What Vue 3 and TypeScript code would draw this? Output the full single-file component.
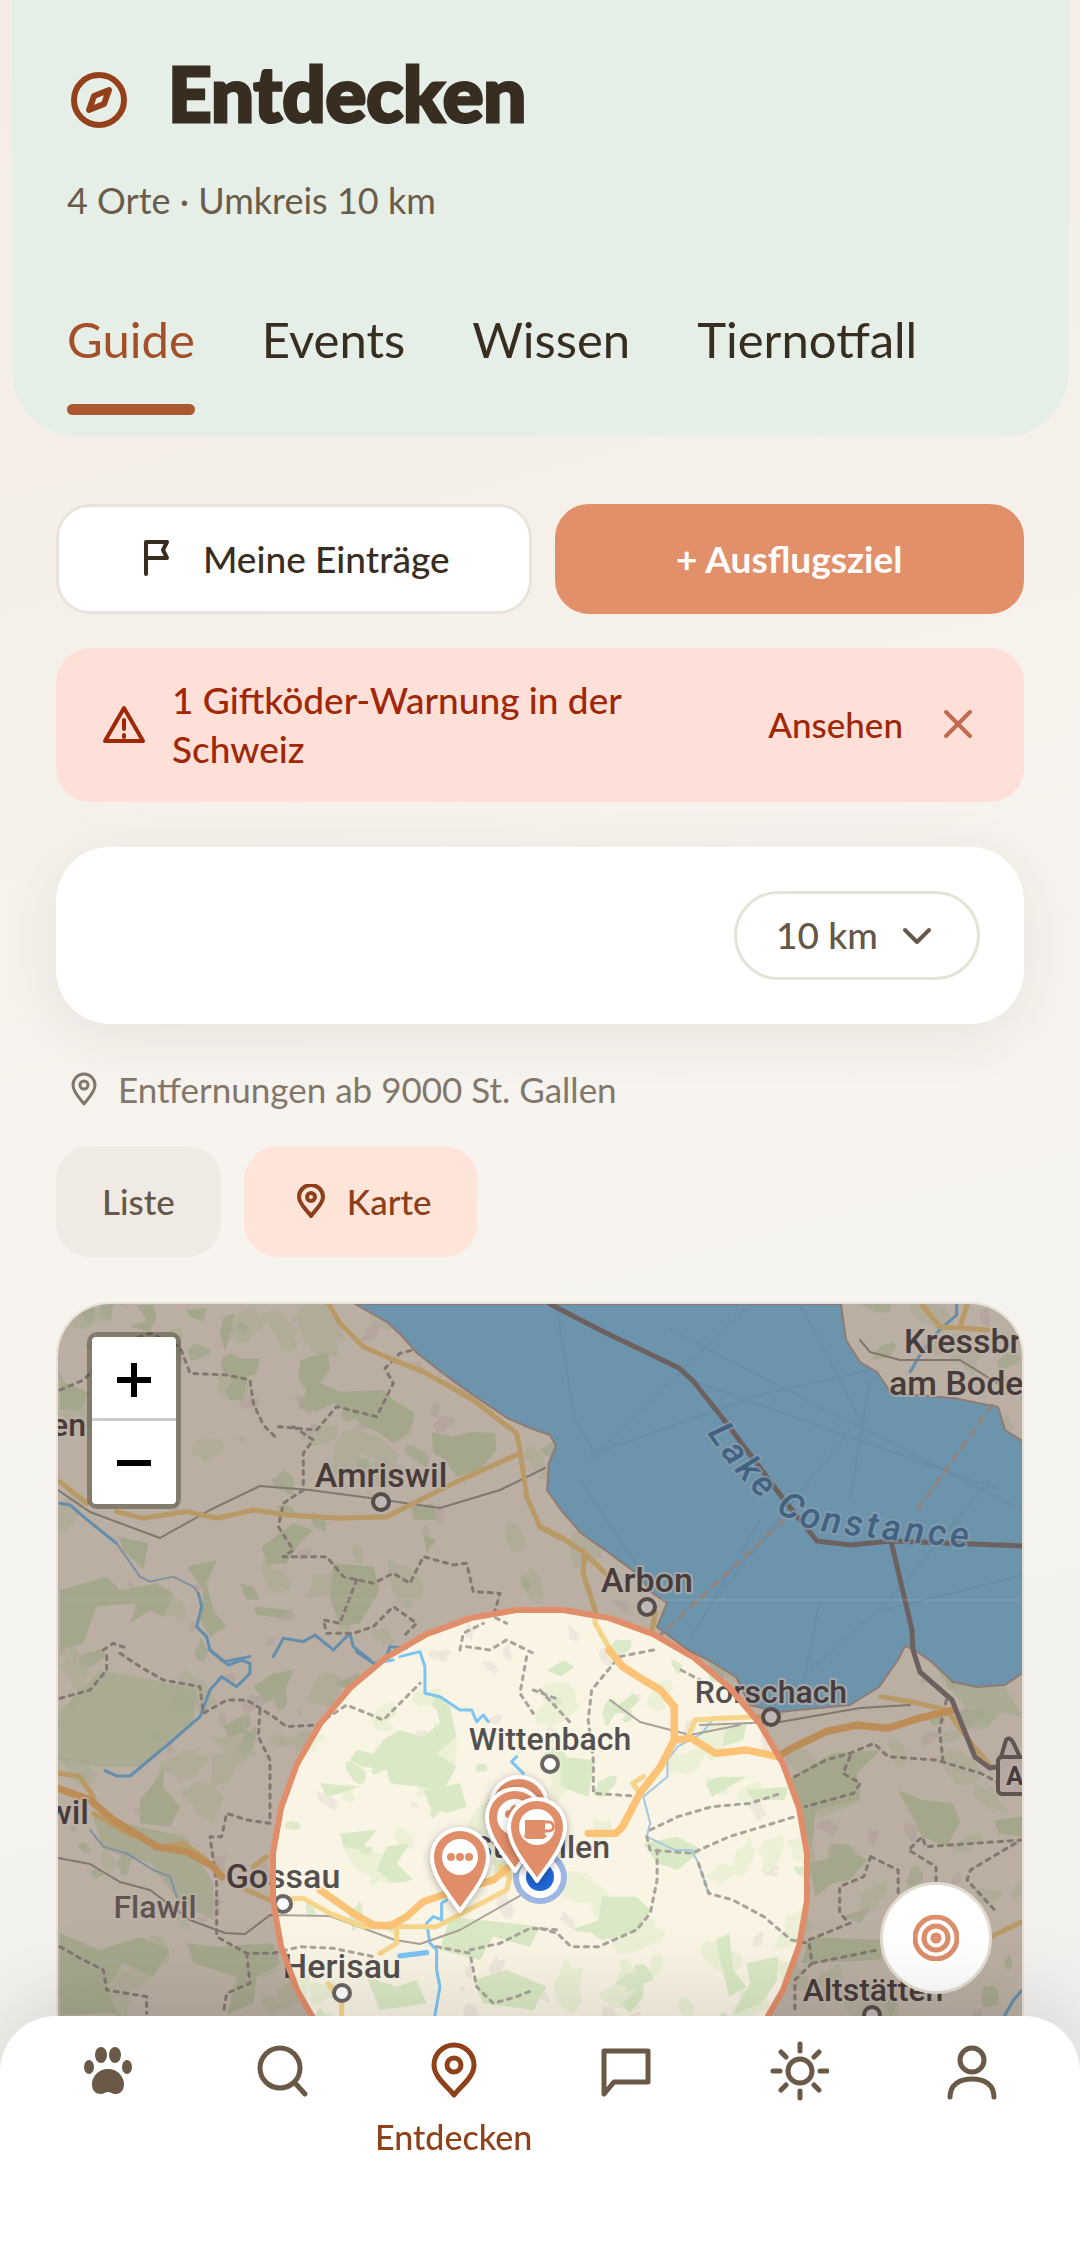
<script setup lang="ts">
import { ref } from 'vue'

interface Point {
  x: number
  y: number
}

interface Place {
  name: string
  x: number
  y: number
  anchor?: 'start' | 'middle' | 'end'
  dot?: Point
  tone?: 'minor' | 'small'
}

const tabs = ['Guide', 'Events', 'Wissen', 'Tiernotfall']
const activeTab = ref('Guide')
const view = ref<'list' | 'map'>('map')
const radius = ref('10')
const radii = ['5', '10', '25', '50']

const navItems = [
  { id: 'pets', label: 'Tiere' },
  { id: 'search', label: 'Suche' },
  { id: 'discover', label: 'Entdecken' },
  { id: 'chat', label: 'Nachrichten' },
  { id: 'care', label: 'Alltag' },
  { id: 'profile', label: 'Profil' },
]
const activeNav = ref('discover')

const places: Place[] = [
  { name: 'en', x: 86, y: 1436, anchor: 'end', tone: 'small' },
  { name: 'Amriswil', x: 381, y: 1487, dot: { x: 381, y: 1502 } },
  { name: 'Kressbr', x: 904, y: 1353, anchor: 'start' },
  { name: 'am Bode', x: 889, y: 1395, anchor: 'start' },
  { name: 'Arbon', x: 647, y: 1592, dot: { x: 647, y: 1607 } },
  { name: 'Rorschach', x: 771, y: 1703, dot: { x: 771, y: 1717 }, tone: 'small' },
  { name: 'Wittenbach', x: 550, y: 1750, dot: { x: 550, y: 1764 }, tone: 'small' },
  { name: 'St. Gallen', x: 610, y: 1858, anchor: 'end', tone: 'small' },
  { name: 'wil', x: 89, y: 1824, anchor: 'end' },
  { name: 'Gossau', x: 283, y: 1888, dot: { x: 283, y: 1904 } },
  { name: 'Flawil', x: 155, y: 1918, tone: 'minor' },
  { name: 'Herisau', x: 342, y: 1978, dot: { x: 342, y: 1993 } },
  { name: 'Altstätten', x: 873, y: 2001, dot: { x: 872, y: 2015 }, tone: 'small' },
]

const center: Point = { x: 540, y: 1877 }
const searchRadius = 268

/* The search area is a polygon of 36 points around the user's position. */
const areaPoints = Array.from({ length: 36 }, (_, i) => {
  const angle = ((i * 10 + 5) * Math.PI) / 180
  const x = center.x + searchRadius * Math.cos(angle)
  const y = center.y + searchRadius * Math.sin(angle)
  return `${x.toFixed(1)} ${y.toFixed(1)}`
})
const areaPath = `M${areaPoints.join('L')}Z`
const dimPath = `M0 1200H1200V2400H0Z${areaPath}`

/* Repeatable terrain: small irregular patches of wood and settlement. */
function makeRandom(seed: number): () => number {
  let state = seed
  return () => {
    state = (state * 1664525 + 1013904223) % 4294967296
    return state / 4294967296
  }
}

function makePatches(seed: number, count: number, min: number, max: number): string {
  const random = makeRandom(seed)
  let path = ''
  for (let i = 0; i < count; i++) {
    const cx = 50 + random() * 980
    const cy = 1300 + random() * 760
    const size = min + random() * (max - min)
    const tilt = random() * 3
    const points: string[] = []
    for (let k = 0; k < 11; k++) {
      const a = (k / 11) * Math.PI * 2
      const r = size * (0.5 + random() * 0.6)
      const px = Math.cos(a) * r * 1.5
      const py = Math.sin(a) * r * 0.8
      const x = cx + px * Math.cos(tilt) - py * Math.sin(tilt)
      const y = cy + px * Math.sin(tilt) + py * Math.cos(tilt)
      points.push(`${x.toFixed(1)} ${y.toFixed(1)}`)
    }
    path += `M${points.join('L')}Z`
  }
  return path
}

const woods = makePatches(11, 90, 3, 11)
const paleWoods = makePatches(29, 150, 6, 20)
const settlements = makePatches(47, 130, 3, 11)

const pins = [
  { x: 519, y: 1859, icon: 'none' },
  { x: 515, y: 1871, icon: 'cloud' },
  { x: 460, y: 1911, icon: 'more' },
  { x: 537, y: 1881, icon: 'cup' },
]
</script>

<template>
  <div class="page">
    <header class="header">
      <div class="title-row">
        <svg class="title-icon" viewBox="0 0 56 56" aria-hidden="true">
          <circle cx="28" cy="28" r="25" />
          <path d="M38 18 33 32 18 38 23 24Z" />
        </svg>
        <h1>Entdecken</h1>
      </div>
      <p class="subtitle">4 Orte · Umkreis 10 km</p>
      <nav class="tabs" aria-label="Bereiche">
        <button
          v-for="tab in tabs"
          :key="tab"
          type="button"
          class="tab"
          :class="{ active: tab === activeTab }"
          @click="activeTab = tab"
        >
          {{ tab }}
        </button>
      </nav>
    </header>

    <main class="content">
      <div class="actions">
        <button type="button" class="action outline">
          <svg class="flag" viewBox="0 0 26 36" aria-hidden="true">
            <path d="M2 34V2H23L19 10 23 18H2" />
          </svg>
          <span>Meine Einträge</span>
        </button>
        <button type="button" class="action filled">+ Ausflugsziel</button>
      </div>

      <section class="alert" role="alert">
        <svg class="alert-icon" viewBox="0 0 44 40" aria-hidden="true">
          <path d="M22 4 41 37H3Z" />
          <path d="M22 16V25M22 31V33" />
        </svg>
        <p>1 Giftköder-Warnung in der Schweiz</p>
        <a href="#warnungen">Ansehen</a>
        <button type="button" class="close" aria-label="Schliessen">
          <svg viewBox="0 0 30 30" aria-hidden="true"><path d="M3 3 27 27M27 3 3 27" /></svg>
        </button>
      </section>

      <section class="search-card">
        <div class="radius">
          <select v-model="radius" aria-label="Umkreis">
            <option v-for="km in radii" :key="km" :value="km">{{ km }} km</option>
          </select>
          <svg viewBox="0 0 30 18" aria-hidden="true"><path d="M3 3 15 15 27 3" /></svg>
        </div>
      </section>

      <p class="origin">
        <svg viewBox="0 0 28 34" aria-hidden="true">
          <path d="M14 32C9 25 3 20 3 13A11 11 0 0 1 25 13C25 20 19 25 14 32Z" />
          <circle cx="14" cy="13" r="4" />
        </svg>
        Entfernungen ab 9000 St. Gallen
      </p>

      <div class="views">
        <button type="button" class="chip" :class="{ active: view === 'list' }" @click="view = 'list'">
          Liste
        </button>
        <button type="button" class="chip" :class="{ active: view === 'map' }" @click="view = 'map'">
          <svg viewBox="-7 0 42 34" aria-hidden="true">
            <path d="M14 32C9 25 2 20 2 13A12 12 0 0 1 26 13C26 20 19 25 14 32Z" />
            <circle cx="14" cy="13" r="4" />
          </svg>
          Karte
        </button>
      </div>

      <section class="map" aria-label="Karte">
        <svg class="map-canvas" viewBox="58 1304 964 964" preserveAspectRatio="xMidYMin slice">
          <rect x="0" y="1200" width="1200" height="1100" fill="#f9f4e4" />
          <path :d="settlements" fill="#f0e7dc" />
          <path :d="paleWoods" class="patch" fill="#ebf0d6" stroke="#ebf0d6" />
          <path :d="woods" class="patch" fill="#dceaca" stroke="#dceaca" />

          <!-- Large woods, north-west -->
          <g transform="translate(40 1290) scale(.3333)" fill="#dae9c5">
            <path d="M290 45H340L350 80 330 125 270 110 320 90Z" />
            <path d="M440 60 500 55 490 95 450 80ZM550 80 585 70 570 140 555 185 540 130Z" />
            <path d="M545 205 570 190 600 205 660 205 650 250 620 260 610 330 570 330 555 300 580 270 545 240Z" />
            <path d="M780 210 865 185 870 240 840 280 900 305 1030 300 1060 330 1125 370 1110 430 1060 460 1010 425 960 400 930 370 880 340 830 365 775 355 800 300 775 270Z" />
            <path d="M1175 425 1240 440 1300 425 1365 430 1370 480 1320 540 1250 560 1215 510 1180 490Z" />
            <path d="M60 270 150 310 120 360 60 360ZM1150 735 1190 750 1160 790ZM1115 650 1180 640 1190 690 1120 690Z" />
            <path d="M665 770 760 700 820 720 780 760 740 820 680 825ZM235 740 325 760 310 840 250 780Z" />
            <path d="M880 820 1000 830 1020 900 960 1000 900 1010 870 920ZM440 830 530 810 500 880 520 960 560 1010 510 1040 480 990 490 900Z" />
            <path d="M60 900 200 860 240 900 350 880 400 910 370 980 330 960 270 1000 290 940 170 950 130 1060 60 1080ZM600 880 640 890 660 930 620 930ZM640 950 750 960 730 985 650 975Z" />
          </g>

          <!-- Large woods, south-west -->
          <g transform="translate(40 1650) scale(.3333)" fill="#dae9c5">
            <path d="M55 190 180 60 340 90 470 120 460 220 300 350 180 350 55 330Z" opacity=".75" />
            <path d="M550 230 600 200 610 250 570 260ZM640 110 700 70 760 60 740 110 680 160ZM300 450 340 400 370 350 370 410 420 470 390 530 300 520Z" />
            <path d="M160 500 440 560 520 700 520 810 420 760 330 640 190 600Z" opacity=".8" />
            <path d="M60 850 180 900 300 860 390 900 340 980 250 940 200 1010 230 1090 60 1095ZM440 880 530 890 700 880 720 940 650 980 640 1060 560 1095 590 980 460 940Z" />
            <path d="M880 100 960 70 940 120ZM1180 130 1230 170 1250 260 1190 310 1250 350 1210 420 1050 400 1040 360 970 350 930 330 950 300 1000 310 1030 270 1080 240 1150 260 1200 220Z" />
            <path d="M840 400 960 410 900 430 860 440ZM1150 420 1260 400 1280 470 1220 490 1170 470ZM900 550 1010 540 960 600 910 590ZM1040 590 1110 580 1070 640 1120 690 1060 700 1010 660Z" />
            <path d="M1230 800 1500 830 1470 890 1360 860 1320 930 1200 900ZM980 980 1070 1010 1130 990 1160 1060 1020 1080ZM1300 990 1400 960 1520 1010 1480 1080 1330 1060Z" />
          </g>

          <!-- Large woods, south-east -->
          <g transform="translate(540 1650) scale(.3444 .3333)" fill="#dae9c5">
            <path d="M20 60 70 30 100 50 60 80ZM200 190 270 130 290 150 250 190ZM60 320 160 330 140 440 60 410Z" />
            <path d="M540 230 600 220 590 270 530 290ZM480 400 520 380 600 380 500 440ZM600 420 720 410 710 450 620 450Z" />
            <path d="M300 580 400 560 470 600 400 660 340 640ZM180 740 280 740 320 780 290 840 180 870 150 850 90 840 170 810Z" />
            <path d="M510 870 550 850 560 960 600 1010 550 1040 530 960ZM240 1060 300 1000 300 1040 260 1090ZM600 940 690 920 690 990 640 1060 560 1095 610 1000Z" />
            <path d="M730 380 850 310 990 300 920 370 930 450 800 480 790 600 760 520ZM1040 420 1110 450 1200 460 1220 520 1180 590 1110 560 1080 500ZM1320 510 1400 500 1400 560 1330 550Z" />
            <path d="M780 640 860 620 880 590 950 630 900 690 850 700 800 740ZM780 860 990 870 990 930 760 940ZM880 800 960 770 930 820Z" />
            <path d="M1110 0 1210 100 1350 110 1400 200 1340 190 1290 230 1200 130Z" opacity=".7" />
          </g>

          <!-- Lake -->
          <path
            class="lake"
            d="M355 1304 387 1322 400 1334 417 1353 440 1371 470 1393 507 1418 530 1428 550 1435 556 1446 549 1463 547 1490 561 1510 581 1533 609 1553 636 1573 651 1592 667 1603 657 1627 688 1650 712 1662 736 1677 750 1705 778 1712 850 1705 879 1687 898 1660 905 1646 915 1650 933 1663 953 1682 977 1687 1005 1685 1024 1672V1442L1005 1430 998 1407 953 1398 891 1393 877 1372 860 1362 846 1340 841 1304Z"
          />
          <path
            class="ferry"
            d="M556 1304 575 1420 600 1460M750 1304 590 1460M800 1304 860 1420M670 1330 1022 1510M590 1455 760 1395 870 1370M715 1600 850 1430M690 1380 1000 1490M870 1380 850 1500M820 1600 800 1700M885 1610 1024 1575M990 1480 890 1600 810 1670M580 1480 640 1570M760 1520 690 1640"
          />
          <path class="ferry warm" d="M992 1405 914 1515M784 1520 720 1580 655 1640" />

          <!-- Rivers -->
          <g transform="translate(40 1290) scale(.3333)" class="river">
            <path d="M60 640 90 645 130 680 230 760" />
            <path class="thin" d="M230 760 300 860 330 875 400 860 460 890 475 910" />
            <path d="M475 910 485 950 470 1010 500 1040 510 1080 550 1115 630 1100M700 1100 730 1045 790 1055 825 1035 880 1080 930 1030 940 1070 990 1110M1040 1100 1050 1070 1100 1075" />
          </g>
          <g transform="translate(40 1650) scale(.3333)" class="river">
            <path d="M510 0 565 45 605 30 630 40 630 70 590 110 545 80 510 120 480 200 400 270 310 345 270 378 230 378 195 362" />
            <path d="M950 5 1000 40 1060 30M1080 20 1140 5 1155 50 1155 130 1200 140 1260 180 1295 180 1310 215 1330 195 1345 215M1430 320 1415 335 1450 370M1220 750 1205 760 1205 810 1180 800 1160 820 1170 880 1190 900 1190 960 1200 1010 1185 1095" />
            <path class="thin" d="M150 540 190 590 260 610 340 660 390 680 410 740" />
            <path d="M1080 918 1160 908" stroke-width="16" />
          </g>
          <g transform="translate(540 1290) scale(.3444 .3333)" class="river">
            <path d="M1210 45V75L1160 120 1100 200 1075 245" />
          </g>
          <g transform="translate(540 1650) scale(.3444 .3333)" class="river">
            <path d="M1400 1020 1375 1050 1350 1095" />
            <path class="thin" d="M500 210 470 250 400 290 370 330 370 380 300 440 320 520 310 560 390 600 440 600 460 640 490 730" />
          </g>

          <!-- District borders -->
          <g transform="translate(40 1290) scale(.3333)" class="border">
            <path d="M60 300 130 270 240 160 330 130 420 170 450 250 560 255 630 270 640 340 670 405 715 450M715 410 830 420 890 350 1010 380 1060 280 1035 235 1080 190 1120 180" />
            <path d="M760 410 820 450 790 490 790 600 730 640 715 710 760 780 730 800 860 800 910 860 1000 880 1060 850 1110 880 1150 800 1240 825 1280 820 1300 905 1380 910 1360 980 1400 1000M950 870 900 1000 850 990 860 1030 940 1030 1000 1010 1060 950 1130 1000 1090 1040M1260 1080 1270 1030 1330 1000M1280 1070 1350 1080 1400 1050 1480 1090" />
            <path d="M190 1080 220 1060 260 1075" />
          </g>
          <g transform="translate(40 1650) scale(.3333)" class="border">
            <path d="M60 145 150 120 200 60 200 10M240 10 300 50 370 90 480 110 490 190 560 150 620 150 700 200 740 230 830 225 920 165 1030 210 1140 100M660 180 655 260 690 330 690 520 620 510 560 490 545 560 510 560 530 700 530 860 620 910 700 910 780 890 880 895 1000 920M620 910 630 1000 560 1030 550 1090" />
            <path d="M60 890 130 930 190 960 200 1020 320 1040 320 1090M1460 20 1440 130 1480 190M1480 120 1560 150M1190 890 1290 910 1310 1010 1360 1060 1430 1040 1480 1020M1290 900 1380 880 1470 835 1560 840" />
          </g>
          <g transform="translate(540 1650) scale(.3444 .3333)" class="border">
            <path d="M330 0 230 20 150 120 140 210 155 330 155 430 300 440M0 120 90 220M410 60 500 110M320 540 400 500 500 470 610 460 700 430M310 560 320 600 440 610 550 560 740 500M340 600 340 690 320 790 280 840 170 890 90 890 50 850 0 835M460 640 490 730 560 750 650 800 730 870 780 880" />
            <path d="M740 380 830 330 900 310 970 280 1010 320 1150 330 1280 370 1390 430M900 320 880 370 930 400 910 430 770 470M1180 150 1160 240 1170 330M1380 580 1250 660 1240 690 1320 780M1400 570 1120 590 1110 560 1070 600 1150 650 1150 700M960 620 1040 660 1040 740M960 620 940 680 870 710 870 790 900 820 780 870 790 940 980 900M790 940 740 990 740 1090" />
          </g>

          <!-- Railways -->
          <g class="rail">
            <path d="M58 1490 90 1512 160 1538 210 1510 260 1486 310 1490 370 1498 440 1508 500 1490 545 1468" />
            <path d="M58 1858 90 1864 120 1882 150 1890 190 1920 225 1933 245 1934 270 1915 330 1916 395 1940 420 1944 460 1930 530 1890" />
            <path d="M610 1700 640 1722 690 1735 740 1725M860 1340 870 1352 900 1360 960 1360 1000 1385M700 1725 780 1722 860 1708 910 1705" />
          </g>

          <!-- Roads -->
          <g transform="translate(40 1290) scale(.3333)" class="road">
            <path d="M865 40 900 100 970 170 1060 210 1150 245 1300 330 1430 430 1440 480 1460 620 1500 710 1560 745M1440 490 1240 580 1040 680 900 685 740 675 640 660 530 685 440 665 310 685 230 665M60 575 140 640" />
          </g>
          <g transform="translate(540 1290) scale(.3444 .3333)" class="road">
            <path d="M0 710 60 740 130 790 125 850 160 960 160 1000 210 1090M130 790 200 860M1110 45 1160 110 1300 120M1240 45 1220 110M335 970 325 1020" />
          </g>
          <g transform="translate(540 1650) scale(.3444 .3333)" class="road">
            <path d="M430 260 450 210 520 205 640 200M990 140 1100 160 1180 180 1260 290 1310 350M1400 815 1310 860M290 430 270 400 300 380" />
            <path class="major" d="M200 0 240 50 300 90 350 120 390 170 390 270 440 265 510 310 600 300 690 320 740 290 830 245 920 225 1010 235 1100 205 1200 180M390 270 350 350 290 430 240 530 220 550 140 550" />
          </g>
          <g transform="translate(40 1650) scale(.3333)" class="road">
            <path d="M55 370 120 380 160 440M160 490 280 560M370 590 430 580 500 630M620 720 690 750 790 745 870 790 970 830 1190 830 1400 720 1410 680 1380 650M1070 830 1070 880 1020 910M865 1000 905 1060 905 1095M640 650 680 620" />
            <path class="major" d="M55 415 150 450 220 510 350 590 440 605 520 650 545 680M840 720 940 790 1000 825 1050 828 1100 800 1150 755 1240 725 1360 690 1420 640" />
          </g>

          <!-- National borders -->
          <path class="nation" d="M550 1304 600 1330 679 1368 694 1382 728 1425 784 1500 817 1541 850 1545 891 1541 1024 1546M891 1541 912 1630 913 1650 920 1672 952 1700 975 1757 990 1768 1024 1762" />
          <path class="tile-edge" d="M58 1600H1024" />

          <!-- Labels -->
          <g class="shield">
            <path d="M1001 1757 1006 1740Q1009 1736 1013 1742L1020 1757" />
            <rect x="998" y="1757" width="50" height="37" rx="4" />
            <text x="1006" y="1785">A</text>
          </g>
          <path id="lake-label-path" d="M707 1433Q762 1516 815 1530Q870 1539 1010 1552" fill="none" />
          <text class="lake-label">
            <textPath href="#lake-label-path">Lake Constance</textPath>
          </text>
          <g v-for="place in places" :key="place.name" class="place" :class="place.tone">
            <text :x="place.x" :y="place.y" :text-anchor="place.anchor ?? 'middle'">{{ place.name }}</text>
            <circle v-if="place.dot" :cx="place.dot.x" :cy="place.dot.y" r="8" />
          </g>

          <!-- Search area -->
          <path :d="dimPath" fill="#2a100c" fill-opacity=".3" fill-rule="evenodd" />
          <path :d="areaPath" class="area" />

          <!-- Own position -->
          <circle :cx="center.x" :cy="center.y" r="27" fill="#9db7e2" />
          <circle :cx="center.x" :cy="center.y" r="21" fill="#fff" />
          <circle :cx="center.x" :cy="center.y" r="14" fill="#2168d8" />

          <g v-for="pin in pins" :key="pin.x" :transform="`translate(${pin.x} ${pin.y})`">
            <path class="pin" d="M0 0C-9-14-28-34-28-54A28 28 0 0 1 28-54C28-34 9-14 0 0Z" />
            <circle cx="0" cy="-54" r="18" fill="#fff" />
            <g v-if="pin.icon === 'more'" fill="#e08e69">
              <circle cx="-9" cy="-54" r="4" />
              <circle cx="0" cy="-54" r="4" />
              <circle cx="9" cy="-54" r="4" />
            </g>
            <g v-if="pin.icon === 'cloud'" fill="#e08e69">
              <circle cx="-6" cy="-57" r="4" />
              <circle cx="0" cy="-61" r="5" />
            </g>
            <g v-if="pin.icon === 'cup'">
              <path d="M-12-61H8V-46H10Q9-42 5-42H-9Q-13-42-13-46H-12Z" fill="#e08e69" />
              <path d="M8-59H12A4 4 0 0 1 12-50H8" fill="none" stroke="#e08e69" stroke-width="3" />
            </g>
          </g>
        </svg>

        <div class="zoom">
          <button type="button" aria-label="Vergrössern">
            <svg viewBox="0 0 34 34" aria-hidden="true"><path d="M0 17H34M17 0V34" /></svg>
          </button>
          <button type="button" aria-label="Verkleinern">
            <svg viewBox="0 0 34 34" aria-hidden="true"><path d="M0 17H34" /></svg>
          </button>
        </div>

        <button type="button" class="locate" aria-label="Auf meinen Standort zentrieren">
          <svg viewBox="0 0 46 46" aria-hidden="true">
            <circle cx="23" cy="23" r="21" />
            <circle cx="23" cy="23" r="12" />
            <circle cx="23" cy="23" r="3" />
          </svg>
        </button>
      </section>
    </main>

    <nav class="bottom-nav" aria-label="Hauptnavigation">
      <button
        v-for="item in navItems"
        :key="item.id"
        type="button"
        class="nav-item"
        :class="{ active: item.id === activeNav }"
        :aria-label="item.label"
        @click="activeNav = item.id"
      >
        <svg viewBox="0 0 60 60" aria-hidden="true">
          <g v-if="item.id === 'pets'" class="solid">
            <ellipse cx="11" cy="26" rx="5" ry="7" />
            <ellipse cx="23" cy="14" rx="6" ry="8" />
            <ellipse cx="37" cy="14" rx="6" ry="8" />
            <ellipse cx="49" cy="26" rx="5" ry="7" />
            <path d="M30 28C40 28 46 36 46 43C46 50 42 53 37 53C34 53 33 51 30 51C27 51 26 53 23 53C18 53 14 50 14 43C14 36 20 28 30 28Z" />
          </g>
          <g v-else-if="item.id === 'search'">
            <circle cx="29" cy="27" r="20" />
            <path d="M44 42 54 53" />
          </g>
          <g v-else-if="item.id === 'discover'">
            <path d="M30 54C23 45 10 36 10 24A20 20 0 0 1 50 24C50 36 37 45 30 54Z" />
            <circle cx="30" cy="24" r="7" />
          </g>
          <g v-else-if="item.id === 'chat'">
            <path d="M8 10H52V41H18L8 53Z" />
          </g>
          <g v-else-if="item.id === 'care'">
            <circle cx="31" cy="30" r="12" />
            <path d="M31 3V10M31 50V57M4 30H11M51 30H58M12 11 17 16M45 44 50 49M12 49 17 44M45 16 50 11" />
          </g>
          <g v-else>
            <circle cx="30" cy="19" r="12" />
            <path d="M8 56C8 44 17 38 30 38C43 38 52 44 52 56" />
          </g>
        </svg>
        <span v-if="item.id === activeNav">{{ item.label }}</span>
      </button>
    </nav>
  </div>
</template>

<style>
body {
  margin: 0;
}
</style>

<style scoped>
.page {
  display: flex;
  flex-direction: column;
  min-height: 100vh;
  box-sizing: border-box;
  font-family: Lato, 'Open Sans', sans-serif;
  color: #382d21;
  background: linear-gradient(165deg, #f6ece7 0%, #f5f0ea 28%, #f7f4ef 50%, #f3f2ef 75%, #f1f0ee 100%);
}

button,
select {
  font-family: inherit;
  margin: 0;
  cursor: pointer;
}

p,
h1 {
  margin: 0;
}

svg {
  display: block;
  flex: none;
  fill: none;
  stroke: currentColor;
  stroke-linecap: round;
  stroke-linejoin: round;
}

/* Header */
.header {
  margin: 0 11px 0 12px;
  padding: 64px 55px 22px;
  background: #e5efe8;
  border-radius: 0 0 66px 66px;
}

.title-row {
  display: flex;
  gap: 41px;
  height: 72px;
}

.title-icon {
  width: 56px;
  height: 56px;
  margin: 8px 0 0 4px;
  align-self: flex-start;
  color: #94401a;
  stroke-width: 6;
}

h1 {
  font-size: 76px;
  line-height: 58px;
  font-weight: 900;
  -webkit-text-stroke: 3px currentColor;
}

.subtitle {
  margin-top: 42px;
  font-size: 36px;
  line-height: 44px;
  color: #6a5c49;
}

.tabs {
  display: flex;
  gap: 67px;
  margin-top: 89px;
}

.tab {
  padding: 0 0 37px;
  border: 0;
  border-bottom: 11px solid transparent;
  background: none;
  font-size: 49px;
  line-height: 56px;
  color: #382d21;
}

.tab.active {
  position: relative;
  color: #a34f28;
}

.tab.active::after {
  content: '';
  position: absolute;
  left: 0;
  right: 0;
  bottom: -11px;
  height: 11px;
  border-radius: 6px;
  background: #ab572f;
}

/* Content */
.content {
  display: flex;
  flex-direction: column;
  flex: 1;
  padding: 67px 56px 0;
}

.actions {
  display: flex;
  gap: 23px;
}

.action {
  display: flex;
  flex: 1 1 0;
  align-items: center;
  justify-content: center;
  gap: 33px;
  box-sizing: border-box;
  height: 110px;
  padding: 0 0 2px;
  border: 3px solid;
  border-radius: 34px;
  font-size: 37px;
  font-weight: 500;
}

.action.outline {
  padding-left: 6px;
  border-color: #e9e3da;
  background: #fff;
  color: #382d21;
}

.action.filled {
  border-color: #e1906a;
  background: #e1906a;
  color: #fff;
  font-weight: 700;
}

.flag {
  width: 26px;
  height: 36px;
  stroke-width: 4;
}

.alert {
  display: flex;
  align-items: center;
  box-sizing: border-box;
  margin-top: 34px;
  padding: 27px 51px 29px 46px;
  border-radius: 34px;
  background: #fee0d9;
  color: #9f2704;
}

.alert-icon {
  width: 44px;
  height: 40px;
  stroke-width: 4;
}

.alert p {
  flex: 1;
  margin: 0 96px 0 26px;
  font-size: 37px;
  line-height: 49px;
  font-weight: 500;
}

.alert a {
  color: inherit;
  font-size: 35px;
  font-weight: 500;
  text-decoration: none;
}

.close {
  margin-left: 40px;
  padding: 0;
  border: 0;
  background: none;
  color: #bf6a52;
}

.close svg {
  width: 30px;
  height: 30px;
  stroke-width: 4;
}

.search-card {
  display: flex;
  justify-content: flex-end;
  margin-top: 45px;
  padding: 44px;
  border-radius: 54px;
  background: #fff;
  box-shadow: 0 12px 60px rgba(50, 45, 40, .08);
}

.radius {
  position: relative;
}

.radius select {
  appearance: none;
  box-sizing: border-box;
  width: 246px;
  height: 89px;
  padding: 0 40px 2px 39px;
  border: 3px solid #e5e2d8;
  border-radius: 45px;
  background: #fff;
  color: #65574a;
  font-size: 37px;
  font-weight: 500;
}

.radius svg {
  position: absolute;
  right: 48px;
  top: 36px;
  width: 30px;
  height: 18px;
  color: #65574a;
  stroke-width: 4;
  pointer-events: none;
}

.origin {
  display: flex;
  align-items: center;
  gap: 20px;
  margin: 45px 0 0 14px;
  font-size: 35px;
  line-height: 40px;
  color: #82776a;
}

.origin svg {
  width: 28px;
  height: 34px;
  stroke-width: 3;
}

.views {
  display: flex;
  gap: 23px;
  margin-top: 37px;
}

.chip {
  display: flex;
  align-items: center;
  gap: 15px;
  height: 111px;
  padding: 0 46px 2px;
  border: 0;
  border-radius: 34px;
  background: #efeae4;
  color: #65574a;
  font-size: 35px;
  font-weight: 500;
}

.chip svg {
  width: 42px;
  height: 34px;
  stroke-width: 4;
}

.chip.active {
  background: #ffe4d9;
  color: #8b3f1a;
}

/* Map */
.map {
  position: relative;
  flex: 1;
  min-height: 700px;
  margin-top: 45px;
  border: 2px solid #e8e1d8;
  border-radius: 54px 54px 0 0;
  overflow: hidden;
}

.map-canvas {
  position: absolute;
  inset: 0;
  width: 100%;
  height: 100%;
  stroke: none;
}

.patch {
  stroke-width: 3;
}

.lake {
  fill: #89cdf3;
  stroke: #b9a99f;
  stroke-width: 2;
}

.ferry {
  stroke: #7fbbe2;
  stroke-opacity: .5;
  stroke-width: 2;
}

.ferry.warm {
  stroke: #c3b3a8;
  stroke-opacity: 1;
  stroke-width: 3;
  stroke-dasharray: 8 7;
}

.river {
  stroke: #7cc4f2;
  stroke-width: 9;
}

.river .thin {
  stroke: #a5c8e0;
  stroke-width: 6;
}

.border {
  stroke: #a9a49b;
  stroke-width: 9;
  stroke-dasharray: 12 17;
}

.rail {
  stroke: #a8a298;
  stroke-width: 2;
}

.road {
  stroke: #f6d58b;
  stroke-width: 15;
}

.road .major {
  stroke: #fcc377;
  stroke-width: 22;
}

.nation {
  stroke: #8a8583;
  stroke-width: 5;
}

.tile-edge {
  stroke: #fff;
  stroke-opacity: .4;
  stroke-width: 1;
}

.place text,
.lake-label,
.shield text {
  font-family: Roboto, sans-serif;
  font-size: 34px;
  font-weight: 500;
  fill: #54504f;
  stroke: #fbf7ea;
  stroke-opacity: .7;
  stroke-width: 4;
  paint-order: stroke;
}

.place.small text {
  font-size: 32px;
}

.place.minor text {
  font-size: 32px;
  fill: #77726f;
}

.place circle {
  fill: #fff;
  stroke: #6b6663;
  stroke-width: 4;
}

.lake-label {
  font-size: 36px;
  font-style: italic;
  letter-spacing: 4px;
  fill: #4a87b7;
  stroke: #b5dcf3;
}

.shield rect,
.shield path {
  fill: #efe9e6;
  stroke: #77716e;
  stroke-width: 4;
}

.shield text {
  font-size: 26px;
  font-weight: 700;
}

.area {
  stroke: #e28d69;
  stroke-width: 6;
}

.pin {
  fill: #e08e69;
  stroke: #fff;
  stroke-width: 4;
  filter: drop-shadow(0 2px 4px rgba(0, 0, 0, .3));
}

.zoom {
  position: absolute;
  left: 29px;
  top: 28px;
  border: 5px solid rgba(64, 60, 40, .45);
  border-radius: 10px;
}

.zoom button {
  display: flex;
  align-items: center;
  justify-content: center;
  box-sizing: border-box;
  width: 84px;
  height: 83px;
  padding: 0;
  border: 0;
  background: #fff;
  color: #000;
}

.zoom button:first-child {
  height: 84px;
  padding-top: 4px;
  border-bottom: 3px solid #ccc;
  border-radius: 4px 4px 0 0;
}

.zoom button:last-child {
  border-radius: 0 0 4px 4px;
}

.zoom svg {
  width: 34px;
  height: 34px;
  stroke-width: 6;
  stroke-linecap: butt;
}

.locate {
  position: absolute;
  right: 30px;
  bottom: 272px;
  display: flex;
  align-items: center;
  justify-content: center;
  box-sizing: border-box;
  width: 112px;
  height: 112px;
  padding: 0;
  border: 3px solid #e2dcd0;
  border-radius: 50%;
  background: #fff;
  color: #dd8e6b;
}

.locate svg {
  width: 46px;
  height: 46px;
  stroke-width: 5;
}

/* Bottom navigation */
.bottom-nav {
  position: fixed;
  left: 0;
  right: 0;
  bottom: 0;
  display: flex;
  box-sizing: border-box;
  height: 252px;
  padding: 25px 22px 0;
  border-radius: 56px 56px 0 0;
  background: #fff;
  box-shadow: 0 -12px 90px rgba(0, 0, 0, .13);
}

.nav-item {
  display: flex;
  flex: 1 1 0;
  min-width: 0;
  flex-direction: column;
  align-items: center;
  justify-content: flex-start;
  padding: 0;
  border: 0;
  background: none;
  color: #6a5947;
}

.nav-item svg {
  width: 60px;
  height: 60px;
  stroke-width: 5;
}

.nav-item .solid {
  fill: currentColor;
  stroke: none;
}

.nav-item span {
  margin-top: 16px;
  font-size: 34px;
  line-height: 40px;
  font-weight: 500;
}

.nav-item.active {
  color: #8f411a;
}
</style>
